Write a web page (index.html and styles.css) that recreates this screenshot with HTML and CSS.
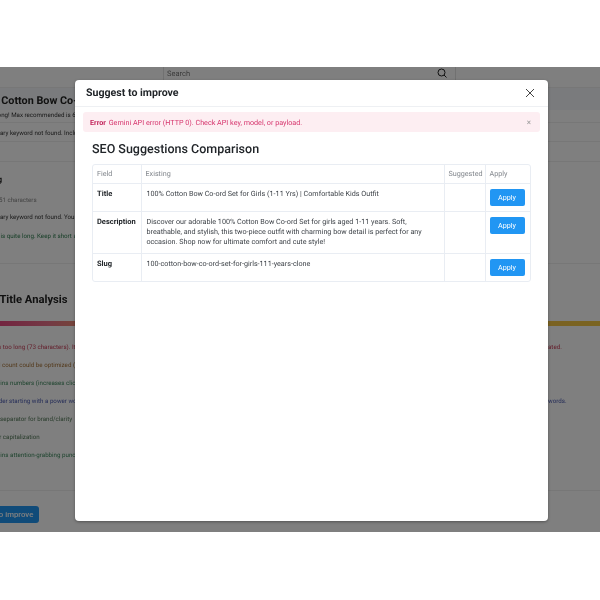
FILE: index.html
```html
<!DOCTYPE html>
<html lang="en">
<head>
<meta charset="utf-8">
<title>Suggest to improve</title>
<link rel="stylesheet" href="styles.css">
</head>
<body>
<div class="screen">
  <div class="page">
    <div class="topbar">
      <div class="search">
        <span class="search-text">Search</span>
        <svg class="search-icon" viewBox="0 0 12 12" aria-hidden="true"><circle cx="5.4" cy="5.4" r="4.2"/><path d="M8.4 8.4 11.4 11.4"/></svg>
      </div>
    </div>
    <div class="band"><h2 class="bg-title">100% Cotton Bow Co-ord Set for Girls</h2></div>
    <div class="bg-row row-a">Title too long! Max recommended is 60 characters for the best results.</div>
    <div class="bg-row row-b">Primary keyword not found. Include your keyword in the title for ranking.</div>
    <div class="section">
      <h3 class="bg-sub">Slug</h3>
      <div class="bg-line line-a">Length: 51 characters</div>
      <div class="bg-line line-b">Primary keyword not found. Your slug needs the keyword.</div>
      <div class="bg-line line-c">This slug is quite long. Keep it short and readable.</div>
    </div>
    <div class="analysis">
      <h2 class="analysis-title">SEO Title Analysis</h2>
      <div class="meter"></div>
      <ul class="findings">
        <li class="f-red f1">Title is too long (73 characters). It may be truncated.<span class="far">ated.</span></li>
        <li class="f-brown f2">Word count could be optimized (ideal 6-9 words)</li>
        <li class="f-green f3">Contains numbers (increases click-through rate)</li>
        <li class="f-blue f4">Consider starting with a power word or power words.<span class="far">words.</span></li>
        <li class="f-olive f5">Uses a separator for brand/clarity</li>
        <li class="f-olive f6">Proper capitalization</li>
        <li class="f-green f7">Contains attention-grabbing punctuation</li>
      </ul>
    </div>
    <div class="bg-footer"><button class="bg-button" type="button">Suggest to improve</button></div>
  </div>

  <div class="overlay">
    <div class="modal">
      <div class="modal-head">
        <h5 class="modal-title">Suggest to improve</h5>
        <svg class="close" viewBox="0 0 10 10" aria-label="Close"><path d="M1 1 9 9M9 1 1 9"/></svg>
      </div>
      <div class="alert">
        <span><strong>Error</strong> Gemini API error (HTTP 0). Check API key, model, or payload.</span>
        <span class="alert-x">×</span>
      </div>
      <div class="modal-body">
        <h4 class="compare-title">SEO Suggestions Comparison</h4>
        <div class="table-wrap">
          <table class="compare">
            <thead>
              <tr><th class="c1">Field</th><th class="c2">Existing</th><th class="c3">Suggested</th><th class="c4">Apply</th></tr>
            </thead>
            <tbody>
              <tr class="r1"><td class="name">Title</td><td>100% Cotton Bow Co-ord Set for Girls (1-11 Yrs) | Comfortable Kids Outfit</td><td></td><td class="action"><button class="apply" type="button">Apply</button></td></tr>
              <tr class="r2"><td class="name">Description</td><td><div class="clamp">Discover our adorable 100% Cotton Bow Co-ord Set for girls aged 1-11 years. Soft, breathable, and stylish, this two-piece outfit with charming bow detail is perfect for any occasion. Shop now for ultimate comfort and cute style!</div></td><td></td><td class="action"><button class="apply" type="button">Apply</button></td></tr>
              <tr class="r1"><td class="name">Slug</td><td>100-cotton-bow-co-ord-set-for-girls-111-years-clone</td><td></td><td class="action"><button class="apply" type="button">Apply</button></td></tr>
            </tbody>
          </table>
        </div>
      </div>
    </div>
  </div>
</div>
</body>
</html>
```
FILE: styles.css
```css
* { box-sizing: border-box; }
html, body { margin: 0; padding: 0; background: #fff; }
body { height: 600px; overflow: hidden; font-family: Roboto, "Noto Sans", sans-serif; text-rendering: geometricPrecision; }

.screen { position: relative; margin-top: 67px; height: 465px; overflow: hidden; background: #fff; filter: blur(.3px); }
.page { height: 465px; color: #333; font-size: 6.2px; }

.topbar { height: 21px; border-bottom: 1px solid #eee; padding-left: 163px; }
.search { width: 293px; height: 20px; display: flex; align-items: flex-start; justify-content: space-between; padding: 1px 8px 0 3px; border-left: 1px solid #e2e2e2; border-right: 1px solid #e2e2e2; }
.search-text { font-size: 7.5px; line-height: 11px; color: #777; }
.search-icon { width: 10px; height: 10px; fill: none; stroke: #222; stroke-width: 1.2; }

.band { height: 22px; background: #f4f7fb; display: flex; align-items: flex-end; overflow: hidden; }
.bg-title { margin: 0 0 2px -28px; font-size: 10.8px; font-weight: 700; white-space: nowrap; color: #222; line-height: 14px; }
.bg-row { height: 19px; border-bottom: 1px solid #eee; white-space: nowrap; overflow: hidden; }
.row-a { height: 13px; text-indent: -28px; line-height: 10px; }
.row-b { text-indent: -13px; line-height: 20px; }

.section { height: 103px; padding: 12px 0 0; margin-top: 19px; border-top: 1px solid #eee; border-bottom: 1px solid #eee; overflow: hidden; }
.bg-sub { margin: 0 0 9px -14px; font-size: 8px; font-weight: 700; line-height: 12px; color: #222; }
.bg-line { line-height: 10px; margin-bottom: 7px; white-space: nowrap; }
.line-a { color: #888; text-indent: -23px; }
.line-b { text-indent: -13px; margin-bottom: 9px; }
.line-c { color: #2e7d4f; text-indent: -26px; }

.analysis { height: 227px; padding-top: 28px; border-bottom: 1px solid #eee; overflow: hidden; }
.analysis-title { margin: 0 0 13px -24px; font-size: 11.2px; line-height: 16px; font-weight: 700; color: #222; white-space: nowrap; }
.meter { height: 5px; background: linear-gradient(90deg, #e64980 0%, #e8738a 8%, #f0a35e 18%, #f5c842 100%); }
.findings { list-style: none; margin: 16px 0 0; padding: 0; }
.findings li { height: 18px; line-height: 10px; position: relative; white-space: nowrap; }
.far { position: absolute; left: 548px; top: 0; text-indent: 0; }
.f-red { color: #c8405a; }
.f-brown { color: #a8763c; }
.f-green { color: #3f8a5f; }
.f-olive { color: #557a5a; }
.f-blue { color: #4a5ab0; }
.f1 { text-indent: -17px; }
.f2 { text-indent: -14px; }
.f3 { text-indent: -16px; }
.f4 { text-indent: -17px; }
.f5 { text-indent: -20px; }
.f6 { text-indent: -17px; }
.f7 { text-indent: -16px; }

.bg-footer { padding: 15px 0 0; overflow: hidden; }
.bg-button { width: 79px; height: 17px; margin-left: -40px; border: 0; border-radius: 3px; background: #2196f3; color: #fff; font: 500 7.8px Roboto, sans-serif; padding: 0; }

.overlay { position: absolute; inset: 0; background: rgba(0, 0, 0, .5); padding: 13px 52px 11px 75px; }
.modal { width: 473px; height: 441px; background: #fff; border-radius: 4px; box-shadow: 0 1px 3px rgba(0, 0, 0, .35); overflow: hidden; }
.modal-head { height: 27px; border-bottom: 1px solid #eef0f3; display: flex; align-items: center; justify-content: space-between; padding: 0 13px 0 11px; }
.modal-title { margin: 0; font-size: 10.6px; font-weight: 700; color: #212529; line-height: 16px; }
.close { width: 10px; height: 10px; fill: none; stroke: #444; stroke-width: 1; }

.alert { margin: 5px 8px 0; height: 20px; padding: 0 9px 0 7px; background: #fdeef2; border-radius: 3px; display: flex; align-items: center; justify-content: space-between; font-size: 7.2px; color: #d6336c; line-height: 11px; }
.alert strong { font-weight: 700; color: #c2255c; margin-right: 1px; }
.alert-x { font-size: 8px; color: #999; }

.modal-body { padding: 8px 17px 0; }
.compare-title { margin: 0 0 4px; font-size: 12.5px; font-weight: 500; line-height: 20px; color: #212529; }
.table-wrap { width: 439px; border: 1px solid #e9edf3; border-radius: 3px; overflow: hidden; }
.compare { width: 437px; table-layout: fixed; border-collapse: collapse; font-size: 7.2px; line-height: 10.3px; color: #3a3f45; }
.compare th, .compare td { border: 1px solid #e9edf3; text-align: left; vertical-align: top; }
.compare tr:first-child th { border-top: 0; }
.compare tr:last-child td { border-bottom: 0; }
.compare th:first-child, .compare td:first-child { border-left: 0; }
.compare th:last-child, .compare td:last-child { border-right: 0; }
.compare th { height: 18px; padding: 0 4px; font-weight: 400; color: #80858b; vertical-align: middle; }
.compare td { padding: 5px; }
.compare .action { padding-left: 4px; }
.c1 { width: 48px; }
.c2 { width: 303px; }
.c3 { width: 41px; }
.c4 { width: 45px; }
.r1 { height: 28px; }
.r2 { height: 42px; }
.clamp { max-width: 283px; }
.compare .name { font-weight: 700; font-size: 7.5px; color: #212529; padding-left: 4px; }
.apply { display: block; width: 35px; height: 17px; border: 0; border-radius: 2px; background: #2196f3; color: #fff; font: 400 7.2px Roboto, sans-serif; padding: 0; }
```
